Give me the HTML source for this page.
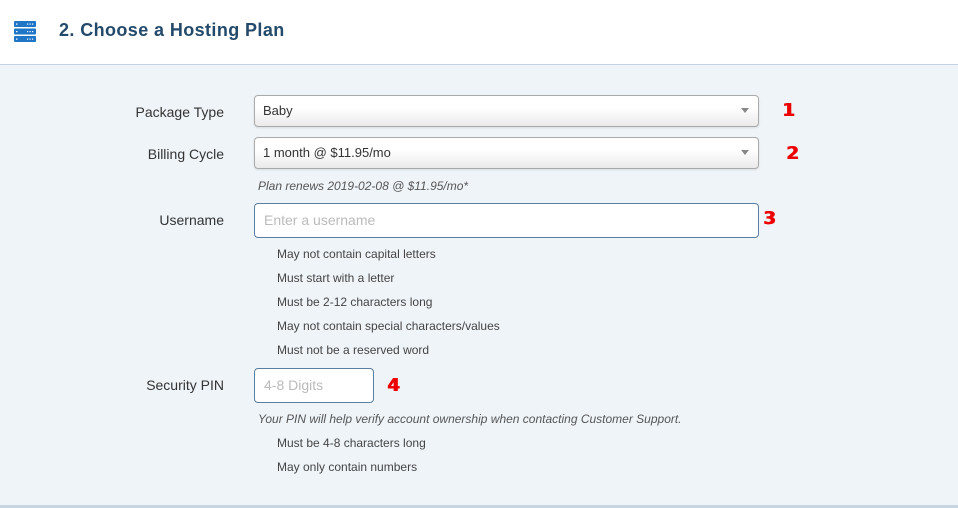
<!DOCTYPE html>
<html><head><style>
body{margin:0;width:958px;height:508px;background:#eff4f9;font-family:"Liberation Sans",Arial,sans-serif;position:relative;overflow:hidden}
.hdr{position:absolute;left:0;top:0;width:958px;height:64px;background:#fff;border-bottom:1px solid #c3d3e6}
.hdr h1{position:absolute;left:59px;top:20px;margin:0;font-size:18px;font-weight:bold;color:#234a6b;letter-spacing:0.4px}
.a{position:absolute}
.lbl{position:absolute;right:734px;font-size:14px;color:#333;white-space:nowrap}
.sel{position:absolute;left:254px;width:505px;height:32px;border:1px solid #aaa;border-radius:4px;background:linear-gradient(#fff 0%,#fff 40%,#eaeaea 100%);box-sizing:border-box;font-size:13px;color:#333;line-height:30px;padding-left:8px;box-shadow:0 1px 2px rgba(0,0,0,.1)}
.sel:after{content:"";position:absolute;right:9px;top:12px;border-left:4px solid transparent;border-right:4px solid transparent;border-top:5px solid #888}
.inp{position:absolute;left:254px;height:35px;border:1px solid #5a7fa0;border-radius:4px;background:#fff;box-sizing:border-box;font-size:14px;color:#bbb;line-height:33px;padding-left:9px}
.rule{position:absolute;left:277px;font-size:12px;color:#444}
.note{position:absolute;left:258px;font-size:12px;color:#555;font-style:italic}
.num{position:absolute;color:#e00;font-weight:bold;font-size:18px;font-family:"DejaVu Sans",sans-serif;text-shadow:1px 0 0 #e00}
.bot{position:absolute;left:0;top:505px;width:958px;height:3px;background:#c8d4e0}
</style></head><body>
<div class="hdr">
<svg class="a" style="left:14px;top:21px" width="22" height="21" viewBox="0 0 22 21">
<rect x="0" y="0" width="22" height="6" rx="1" fill="#1f75c6"/><rect x="0" y="7.5" width="22" height="6" rx="1" fill="#1f75c6"/><rect x="0" y="15" width="22" height="6" rx="1" fill="#1f75c6"/>
<g fill="#fff"><rect x="2" y="2.5" width="1.5" height="1.2"/><rect x="13" y="2.5" width="1.2" height="1.2"/><rect x="15.5" y="2.5" width="1.2" height="1.2"/><rect x="18" y="2.5" width="1.2" height="1.2"/>
<rect x="2" y="10" width="1.5" height="1.2"/><rect x="13" y="10" width="1.2" height="1.2"/><rect x="15.5" y="10" width="1.2" height="1.2"/><rect x="18" y="10" width="1.2" height="1.2"/>
<rect x="2" y="17.5" width="1.5" height="1.2"/><rect x="13" y="17.5" width="1.2" height="1.2"/><rect x="15.5" y="17.5" width="1.2" height="1.2"/><rect x="18" y="17.5" width="1.2" height="1.2"/></g>
</svg>
<h1>2. Choose a Hosting Plan</h1>
</div>
<div class="lbl" style="top:104px">Package Type</div>
<div class="sel" style="top:95px">Baby</div>
<div class="num" style="left:782px;top:100px">1</div>
<div class="lbl" style="top:146px">Billing Cycle</div>
<div class="sel" style="top:137px">1 month @ $11.95/mo</div>
<div class="num" style="left:786px;top:143px">2</div>
<div class="note" style="top:179px">Plan renews 2019-02-08 @ $11.95/mo*</div>
<div class="lbl" style="top:212px">Username</div>
<div class="inp" style="top:203px;width:505px">Enter a username</div>
<div class="num" style="left:763px;top:208px">3</div>
<div class="rule" style="top:247px">May not contain capital letters</div>
<div class="rule" style="top:271px">Must start with a letter</div>
<div class="rule" style="top:295px">Must be 2-12 characters long</div>
<div class="rule" style="top:319px">May not contain special characters/values</div>
<div class="rule" style="top:343px">Must not be a reserved word</div>
<div class="lbl" style="top:377px">Security PIN</div>
<div class="inp" style="top:368px;width:120px">4-8 Digits</div>
<div class="num" style="left:387px;top:375px">4</div>
<div class="note" style="top:412px">Your PIN will help verify account ownership when contacting Customer Support.</div>
<div class="rule" style="top:436px">Must be 4-8 characters long</div>
<div class="rule" style="top:460px">May only contain numbers</div>
<div class="bot"></div>
</body></html>
